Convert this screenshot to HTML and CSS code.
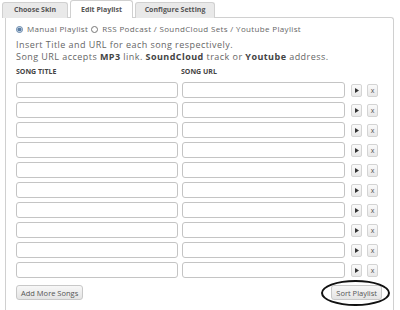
FILE: index.html
```html
<!DOCTYPE html>
<html lang="en">
<head>
    <meta charset="UTF-8">
    <title>Edit Playlist</title>
    <link rel="stylesheet" href="styles.css">
</head>
<body>
    <div class="tabs">
        <a href="javascript:;" class="tab tab-skin">Choose Skin</a>
        <a href="javascript:;" class="tab tab-edit tab-active">Edit Playlist</a>
        <a href="javascript:;" class="tab tab-config">Configure Setting</a>
    </div>
    <div class="panel">
        <div class="mode">
            <label><input type="radio" name="mode" checked> Manual Playlist</label>
            <label><input type="radio" name="mode"> RSS Podcast / SoundCloud Sets / Youtube Playlist</label>
        </div>
        <p class="help">Insert Title and URL for each song respectively.<br>
            Song URL accepts <b>MP3</b> link. <b>SoundCloud</b> track or <b>Youtube</b> address.</p>
        <div class="heads">
            <span class="head-title">SONG TITLE</span>
            <span>SONG URL</span>
        </div>
        <div class="rows" id="rows"></div>
        <div class="actions">
            <button class="btn">Add More Songs</button>
            <span class="mark"><button class="btn">Sort Playlist</button></span>
        </div>
    </div>
    <script>
        var rows = document.getElementById('rows');
        for (var i = 0; i < 10; i++) {
            var row = document.createElement('div');
            row.className = 'row';
            row.innerHTML = '<input type="text" class="song-title">' +
                '<input type="text" class="song-url">' +
                '<button class="mini play"><svg width="4" height="5" viewBox="0 0 4 5"><path d="M0 0 L4 2.5 L0 5 Z" fill="#333"/></svg></button>' +
                '<button class="mini">x</button>';
            rows.appendChild(row);
        }
    </script>
</body>
</html>
```

FILE: styles.css
```css
* {
    margin: 0;
    padding: 0;
    box-sizing: border-box;
}
body {
    font-family: "Open Sans", "DejaVu Sans", sans-serif;
    font-size: 9px;
    color: #666;
    background: #fff;
    height: 310px;
    overflow: hidden;
}
.tabs {
    display: flex;
    align-items: flex-end;
    height: 18px;
    padding-left: 2px;
    position: relative;
    z-index: 1;
}
.tab {
    display: block;
    height: 16px;
    line-height: 14px;
    border: 1px solid #d0d0d0;
    border-bottom: none;
    border-radius: 3px 3px 0 0;
    background: #e9e9e9;
    color: #555;
    font-size: 7px;
    font-weight: bold;
    text-align: center;
    text-decoration: none;
}
.tab-skin {
    width: 66px;
    margin-right: 2px;
}
.tab-edit {
    width: 63px;
    margin-right: 2px;
}
.tab-config {
    width: 80px;
}
.tab-active {
    height: 18px;
    line-height: 17px;
    background: #fff;
}
.panel {
    margin: -1px 0 0 5px;
    width: 389px;
    height: 293px;
    border: 1px solid #d0d0d0;
    border-bottom: none;
    border-radius: 0 3px 0 0;
    padding: 5px 10px 0 10px;
}
.mode {
    display: flex;
    gap: 3px;
    height: 12px;
    line-height: 12px;
    font-size: 8px;
    letter-spacing: 0.35px;
}
.mode label {
    display: flex;
    align-items: center;
}
.mode input {
    width: 7px;
    height: 7px;
    margin: 0 4px 0 0;
    accent-color: #5b7fa6;
}
.help {
    margin-top: 4px;
    line-height: 12px;
    letter-spacing: 0.45px;
}
.help b {
    color: #444;
}
.heads {
    display: flex;
    margin-top: 4px;
    height: 10px;
    line-height: 10px;
    font-size: 7px;
    font-weight: bold;
    color: #444;
}
.head-title {
    width: 165px;
}
.rows {
    margin-top: 5px;
}
.row {
    display: flex;
    align-items: center;
    height: 16px;
    margin-bottom: 4px;
}
.row input {
    height: 16px;
    border: 1px solid #c4c4c4;
    border-radius: 3px;
    background: #fff;
}
.song-title {
    width: 162px;
    margin-right: 4px;
}
.song-url {
    width: 163px;
    margin-right: 6px;
}
.mini {
    width: 12px;
    height: 13px;
    margin-right: 5px;
    padding: 0;
    border: 1px solid #d4d4d4;
    border-radius: 2px;
    background: linear-gradient(#fafafa, #e8e8e8);
    font-family: "Open Sans", sans-serif;
    font-size: 7px;
    line-height: 9px;
    color: #555;
    display: flex;
    align-items: center;
    justify-content: center;
}
.actions {
    display: flex;
    justify-content: space-between;
    margin-top: 7px;
    padding-right: 1px;
}
.btn {
    height: 15px;
    padding: 0 4px;
    border: 1px solid #c8c8c8;
    border-radius: 3px;
    background: linear-gradient(#f7f7f7, #e4e4e4);
    font-family: "Open Sans", sans-serif;
    font-size: 7.5px;
    color: #555;
}
.mark {
    position: relative;
    display: block;
}
.mark::after {
    content: "";
    position: absolute;
    left: -10px;
    right: -8px;
    top: -5px;
    bottom: -6px;
    border: 2px solid #111;
    border-radius: 50%;
}
```
